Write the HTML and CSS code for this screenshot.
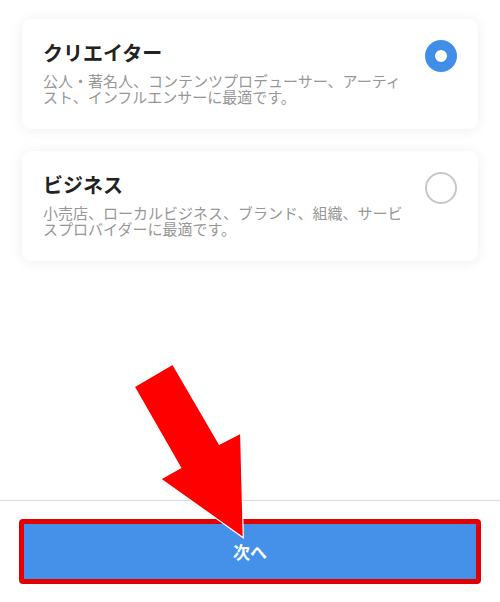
FILE: index.html
```html
<!DOCTYPE html>
<html lang="ja">
<head>
<meta charset="utf-8">
<title>アカウントの種類</title>
<link rel="stylesheet" href="styles.css">
</head>
<body>
<div class="page">
  <main class="options">
    <div class="card">
      <div class="card-text">
        <div class="card-title">クリエイター</div>
        <div class="card-desc">公人・著名人、コンテンツプロデューサー、アーティスト、インフルエンサーに最適です。</div>
      </div>
      <span class="radio radio-on"></span>
    </div>
    <div class="card">
      <div class="card-text">
        <div class="card-title">ビジネス</div>
        <div class="card-desc">小売店、ローカルビジネス、ブランド、組織、サービスプロバイダーに最適です。</div>
      </div>
      <span class="radio"></span>
    </div>
  </main>
  <footer class="footer">
    <button class="next-btn">次へ</button>
  </footer>
</div>
<svg class="arrow" width="500" height="602" viewBox="0 0 500 602">
  <polygon points="134.3,386.7 172.7,364.3 219.3,444.3 240.7,433.3 243.3,537.7 160.7,479 180.7,467.7" fill="#ff0000" stroke="#ffffff" stroke-width="1.2" stroke-linejoin="miter"/>
</svg>
</body>
</html>
```
FILE: styles.css
```css
* { box-sizing: border-box; }
html, body { margin: 0; padding: 0; }
body {
  width: 500px;
  height: 602px;
  background: #ffffff;
  font-family: "Noto Sans CJK JP", "Noto Sans", sans-serif;
  position: relative;
  overflow: hidden;
}
.page {
  display: flex;
  flex-direction: column;
  height: 602px;
}
.options {
  height: 500px;
  padding: 19px 22px 0 22px;
  display: flex;
  flex-direction: column;
  gap: 22px;
}
.card {
  background: #ffffff;
  border-radius: 9px;
  box-shadow: 0 1px 14px rgba(0, 0, 0, 0.07);
  padding: 21px 21px 0 21px;
  display: flex;
  align-items: flex-start;
  gap: 20px;
  height: 110px;
}
.card-text {
  flex: 1;
  min-width: 0;
}
.card-title {
  font-size: 20px;
  font-weight: 700;
  line-height: 26px;
  color: #222222;
}
.card-desc {
  margin-top: 7px;
  font-size: 15px;
  line-height: 16px;
  color: #979797;
}
.radio {
  flex: none;
  width: 32px;
  height: 32px;
  border-radius: 50%;
  border: 2px solid #c7c7c7;
  margin-top: 0;
}
.radio-on {
  border: 10.5px solid #3f8fe8;
}
.footer {
  border-top: 1px solid #dadada;
  padding: 18px 19px 0 19px;
}
.next-btn {
  display: block;
  width: 462px;
  height: 65px;
  background: #4590e9;
  border: 5px solid #e30000;
  border-radius: 4px;
  color: #ffffff;
  font-family: "Noto Sans CJK JP", "Noto Sans", sans-serif;
  font-size: 17px;
  font-weight: 700;
  padding: 0;
}
.arrow {
  position: absolute;
  left: 0;
  top: 0;
  pointer-events: none;
}
```
